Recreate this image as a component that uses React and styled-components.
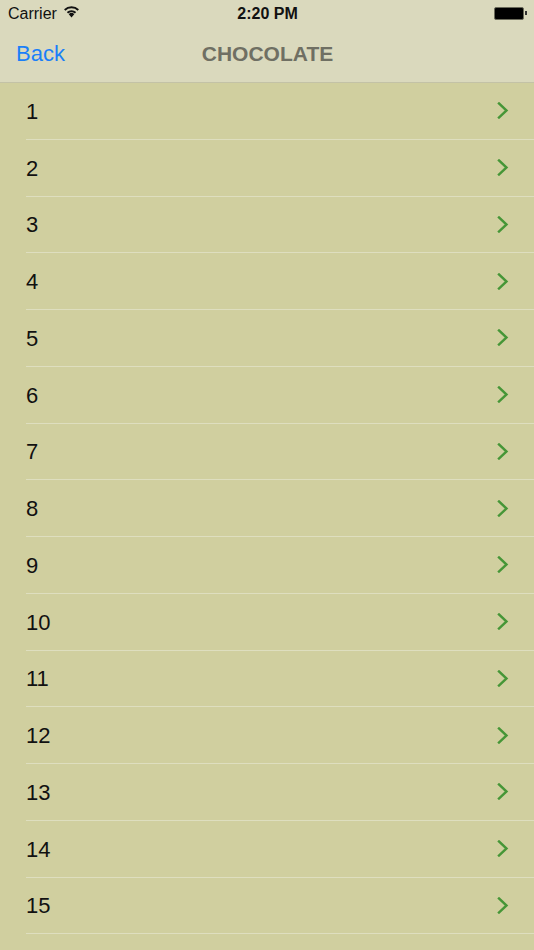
import React from "react";
import styled, { createGlobalStyle } from "styled-components";

const GlobalStyle = createGlobalStyle`
  html, body {
    margin: 0;
    padding: 0;
    background: #d0cf9f;
    overflow: hidden;
  }
  body {
    font-family: "Liberation Sans", Arial, sans-serif;
  }
`;

const rows = Array.from({ length: 15 }, (_, i) => i + 1);

function WifiIcon() {
  return (
    <svg width="17" height="13" viewBox="0 0 16 12">
      <path d="M8 11.6 L5.4 8.5 A3.8 3.8 0 0 1 10.6 8.5 Z" fill="#111" />
      <path d="M3.6 6.4 A6.6 6.6 0 0 1 12.4 6.4 L11.2 7.8 A4.8 4.8 0 0 0 4.8 7.8 Z" fill="#111" />
      <path d="M1 3.9 A10.2 10.2 0 0 1 15 3.9 L13.8 5.3 A8.4 8.4 0 0 0 2.2 5.3 Z" fill="#111" />
    </svg>
  );
}

function Chevron() {
  return (
    <svg width="12" height="17" viewBox="0 0 12 17">
      <path d="M2 1.5 L9.5 8.5 L2 15.5" fill="none" stroke="#469637" strokeWidth="2.4" strokeLinecap="square" />
    </svg>
  );
}

export default function App() {
  return (
    <>
      <GlobalStyle />
      <Page>
        <Header>
          <StatusBar>
            <Carrier>
              Carrier
              <WifiIcon />
            </Carrier>
            <Clock>2:20 PM</Clock>
            <Battery>
              <BatteryBody />
              <BatteryNub />
            </Battery>
          </StatusBar>
          <NavBar>
            <BackButton>Back</BackButton>
            <Title>CHOCOLATE</Title>
          </NavBar>
        </Header>
        <List>
          {rows.map((n) => (
            <Row key={n}>
              <RowInner>
                <Label>{n}</Label>
                <Chevron />
              </RowInner>
            </Row>
          ))}
        </List>
      </Page>
    </>
  );
}

const Page = styled.div`
  width: 534px;
  height: 950px;
  overflow: hidden;
  background: #d0cf9f;
`;
const Header = styled.div`
  background: #dad9bd;
  border-bottom: 1px solid #c3c2a6;
`;
const StatusBar = styled.div`
  height: 26px;
  display: grid;
  grid-template-columns: 1fr auto 1fr;
  align-items: center;
  padding: 0 7px 0 8px;
  font-size: 16px;
  color: #111;
`;
const Carrier = styled.div`
  display: flex;
  align-items: center;
  gap: 6px;
  margin-top: 1px;
  svg {
    margin-top: -4px;
  }
`;
const Clock = styled.div`
  font-weight: bold;
  font-size: 16px;
  margin-top: 1px;
`;
const Battery = styled.div`
  justify-self: end;
  display: flex;
  align-items: center;
`;
const BatteryBody = styled.div`
  width: 28px;
  height: 11px;
  background: #000;
  border: 1px solid #6a6a5a;
  border-radius: 2px;
`;
const BatteryNub = styled.div`
  width: 2px;
  height: 4px;
  background: #333;
  margin-left: 1px;
`;
const NavBar = styled.div`
  height: 56px;
  display: flex;
  align-items: center;
  justify-content: center;
  position: relative;
`;
const BackButton = styled.div`
  position: absolute;
  left: 16px;
  top: 0;
  bottom: 0;
  display: flex;
  align-items: center;
  font-size: 22px;
  color: #1a7ff8;
`;
const Title = styled.div`
  font-size: 21px;
  font-weight: bold;
  color: #6f6f63;
  margin-left: 1px;
`;
const List = styled.div`
  display: flex;
  flex-direction: column;
`;
const Row = styled.div`
  height: 56.75px;
  padding-left: 26px;
  box-sizing: border-box;
`;
const RowInner = styled.div`
  height: 100%;
  box-sizing: border-box;
  border-bottom: 1px solid #dedebf;
  display: flex;
  align-items: center;
  justify-content: space-between;
  padding-right: 25px;
`;
const Label = styled.div`
  font-size: 22px;
  color: #111;
  margin-top: 2px;
`;
